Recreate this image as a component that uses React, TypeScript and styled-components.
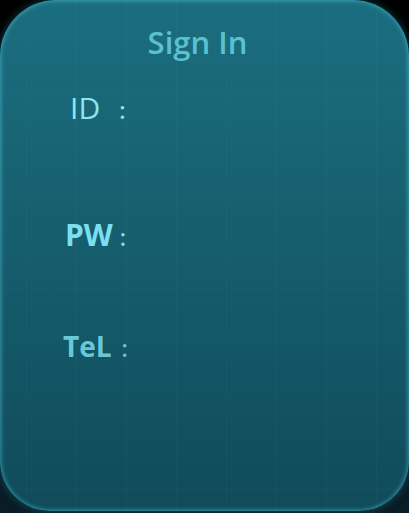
import React from "react";
import styled, { createGlobalStyle } from "styled-components";

const Global = createGlobalStyle`
  html, body { margin: 0; padding: 0; }
  body {
    width: 409px;
    height: 513px;
    overflow: hidden;
    background: linear-gradient(180deg, #000000 0%, #04121a 50%, #0a1c26 100%);
    font-family: "Open Sans", "DejaVu Sans", sans-serif;
  }
`;

const Panel = styled.div`
  box-sizing: border-box;
  width: 409px;
  height: 511px;
  border-radius: 56px 56px 50px 50px;
  background-color: #155d6d;
  background-image:
    linear-gradient(90deg, rgba(90, 200, 220, 0.045) 1px, transparent 1px),
    linear-gradient(0deg, rgba(90, 200, 220, 0.03) 1px, transparent 1px),
    linear-gradient(180deg, #1b6e7f 0%, #165e6e 45%, #104b5a 100%);
  background-size: 50px 50px, 50px 50px, 100% 100%;
  background-position: 26px 0, 0 -10px, 0 0;
  box-shadow: inset 0 0 4px 1px rgba(80, 200, 220, 0.6), 0 0 8px rgba(30, 130, 150, 0.5);
  display: flex;
  flex-direction: column;
  padding-top: 22px;
`;

const Title = styled.h1`
  margin: 0;
  text-align: center;
  font-size: 31px;
  font-weight: 600;
  line-height: 40px;
  color: #5ac1d1;
  padding-right: 14px;
`;

const Row = styled.div<{ $top: number; $left: number }>`
  display: flex;
  align-items: baseline;
  margin-top: ${(p) => p.$top}px;
  padding-left: ${(p) => p.$left}px;
  height: 40px;
  line-height: 40px;
`;

const Label = styled.span<{ $bold?: boolean; $color: string; $size: number }>`
  font-size: ${(p) => p.$size}px;
  font-weight: ${(p) => (p.$bold ? 700 : 400)};
  color: ${(p) => p.$color};
`;

const Colon = styled.span<{ $color: string; $gap: number }>`
  font-size: 23px;
  font-weight: 600;
  color: ${(p) => p.$color};
  margin-left: ${(p) => p.$gap}px;
`;

export default function App() {
  return (
    <>
      <Global />
      <Panel>
        <Title>Sign In</Title>
        <Row $top={26} $left={70}>
          <Label $size={30} $color="#8ce6f2">ID</Label>
          <Colon $color="#8ce6f2" $gap={19}>:</Colon>
        </Row>
        <Row $top={87} $left={65}>
          <Label $size={30} $bold $color="#7adff0">PW</Label>
          <Colon $color="#7adff0" $gap={7}>:</Colon>
        </Row>
        <Row $top={71} $left={63}>
          <Label $size={28} $bold $color="#69c8d6">TeL</Label>
          <Colon $color="#69c8d6" $gap={10}>:</Colon>
        </Row>
      </Panel>
    </>
  );
}
